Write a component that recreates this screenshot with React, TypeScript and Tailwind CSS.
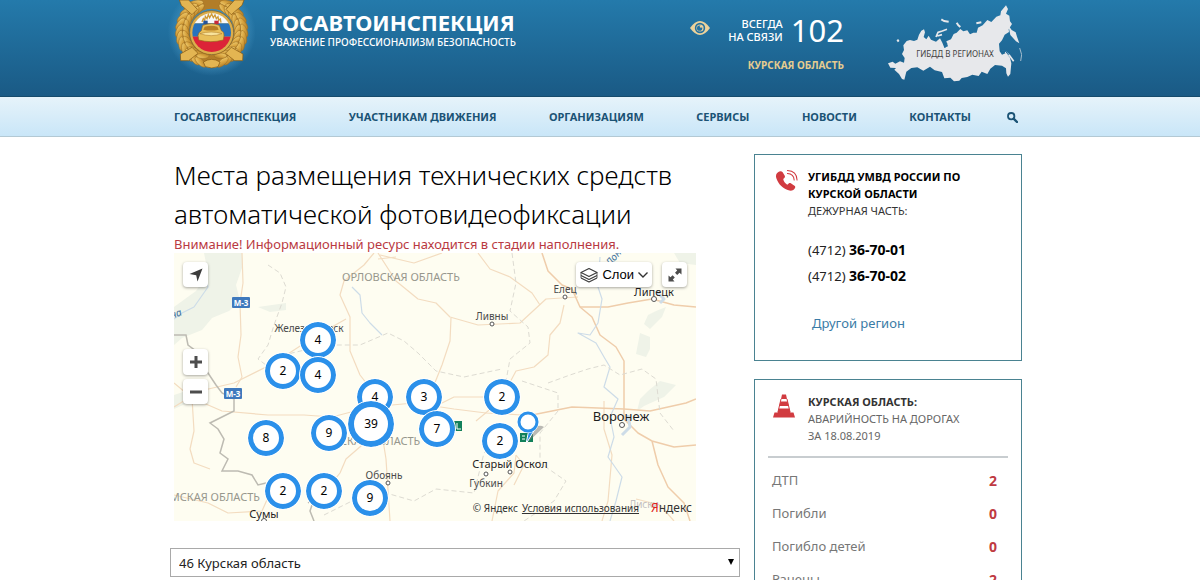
import { useState } from "react";

const navItems = [
  "ГОСАВТОИНСПЕКЦИЯ",
  "УЧАСТНИКАМ ДВИЖЕНИЯ",
  "ОРГАНИЗАЦИЯМ",
  "СЕРВИСЫ",
  "НОВОСТИ",
  "КОНТАКТЫ",
];

const stats = [
  { name: "ДТП", value: 2 },
  { name: "Погибли", value: 0 },
  { name: "Погибло детей", value: 0 },
  { name: "Ранены", value: 2 },
];

// later items are drawn over earlier ones
const clusters = [
  { count: 4, pos: "left-[126px] top-[69px]" },
  { count: 2, pos: "left-[91px] top-[100px]" },
  { count: 4, pos: "left-[126px] top-[104px]" },
  { count: 4, pos: "left-[183px] top-[126px]" },
  { count: 3, pos: "left-[232px] top-[126px]" },
  { count: 2, pos: "left-[310px] top-[126px]" },
  { count: 7, pos: "left-[245px] top-[158px]" },
  { count: 9, pos: "left-[137px] top-[162px]" },
  { count: 8, pos: "left-[74px] top-[167px]" },
  { count: 2, pos: "left-[308px] top-[170px]" },
  { count: 2, pos: "left-[91px] top-[220px]" },
  { count: 2, pos: "left-[132px] top-[220px]" },
  { count: 9, pos: "left-[178px] top-[227px]" },
];

const leafAngles = [-62, -50, -38, -26, -14, -2, 10, 22, 34, 46, 58, 70];

function Emblem() {
  return (
    <svg viewBox="0 0 270 228" className="h-[76px] w-[90px]" role="img" aria-label="Госавтоинспекция">
      <defs>
        <linearGradient id="gold" x1="0" y1="0" x2="1" y2="1">
          <stop offset="0" stopColor="#f3d57c" />
          <stop offset="0.5" stopColor="#d9a540" />
          <stop offset="1" stopColor="#a3701f" />
        </linearGradient>
        <radialGradient id="glow">
          <stop offset="0.7" stopColor="#4f9cc8" stopOpacity="0.6" />
          <stop offset="1" stopColor="#4f9cc8" stopOpacity="0" />
        </radialGradient>
        <clipPath id="disc">
          <circle cx="137" cy="98" r="58" />
        </clipPath>
      </defs>
      <circle cx="137" cy="96" r="132" fill="url(#glow)" />
      <circle cx="137" cy="95" r="86" fill="none" stroke="#b27d28" strokeWidth="34" />
      {leafAngles.map((a) => (
        <g key={a} fill="url(#gold)" stroke="#9a6a1e" strokeWidth="1.5">
          <ellipse cx="234" cy="95" rx="9" ry="21" transform={`rotate(${a} 137 95) rotate(-22 234 95)`} />
          <ellipse cx="214" cy="95" rx="8" ry="19" transform={`rotate(${a} 137 95) rotate(20 214 95)`} />
          <ellipse cx="40" cy="95" rx="9" ry="21" transform={`rotate(${-a} 137 95) rotate(22 40 95)`} />
          <ellipse cx="60" cy="95" rx="8" ry="19" transform={`rotate(${-a} 137 95) rotate(-20 60 95)`} />
        </g>
      ))}
      <g fill="#e3b552" stroke="#80530f" strokeWidth="2">
        <path d="M40 0 L68 0 L94 28 L78 44 L46 16 Z" />
        <path d="M234 0 L206 0 L180 28 L196 44 L228 16 Z" />
        <path d="M78 142 L96 160 L68 182 L44 182 L43 162 Z" />
        <path d="M196 142 L178 160 L206 182 L230 182 L231 162 Z" />
        <path d="M112 186 Q137 170 162 186 L156 200 Q137 208 118 200 Z" />
      </g>
      <circle cx="137" cy="98" r="66" fill="#dcae4b" stroke="#8a5c18" strokeWidth="2" />
      <g clipPath="url(#disc)">
        <rect x="78" y="38" width="120" height="32" fill="#f6f8fa" />
        <rect x="78" y="70" width="120" height="40" fill="#2773bd" />
        <rect x="78" y="110" width="120" height="50" fill="#dc2338" />
      </g>
      <path
        d="M108 66 L112 56 L116 61 L118 49 L123 56 L127 44 L131 53 L137 42 L142 53 L147 45 L151 56 L156 50 L158 61 L163 57 L165 68"
        fill="none"
        stroke="#cf9a35"
        strokeWidth="4"
      />
      <rect x="112" y="62" width="13" height="10" fill="#23539a" />
      <rect x="145" y="62" width="13" height="10" fill="#c8283a" />
      <path
        d="M110 76 Q137 66 160 76 L166 92 Q176 96 174 108 L172 120 Q134 130 98 120 L96 106 Q98 96 106 92 Z"
        fill="#e8bf59"
        stroke="#94651c"
        strokeWidth="2"
      />
      <path d="M116 80 Q136 74 154 80 L158 89 Q134 94 112 89 Z" fill="#b77e24" />
      <path d="M102 101 Q136 91 168 101 Q136 113 102 101 Z" fill="#f8e39b" stroke="#a87422" strokeWidth="1.5" />
    </svg>
  );
}

function RussiaMap() {
  return (
    <svg viewBox="24 12 402 234" className="h-[78px] w-[134px] fill-[#e7e8eb]" aria-hidden="true">
      <path d="M24 190 L38 185 L46 191 L60 184 L72 188 L74 174 L66 162 L72 150 L70 136 L80 123 L90 120 L102 123 L112 119 L117 104 L124 92 L132 88 L135 97 L131 111 L139 118 L146 107 L153 119 L168 125 L180 115 L187 128 L193 143 L204 139 L199 124 L213 118 L221 102 L230 98 L241 87 L250 94 L262 91 L270 103 L280 98 L290 98 L294 83 L308 76 L322 60 L334 66 L349 50 L361 46 L363 34 L378 16 L384 27 L378 41 L388 47 L390 64 L396 72 L386 88 L387 96 L374 104 L366 121 L357 131 L359 154 L366 164 L378 159 L390 173 L394 190 L391 222 L384 230 L379 220 L378 205 L366 197 L345 195 L331 206 L322 222 L305 215 L296 228 L277 224 L262 231 L245 234 L238 242 L222 244 L211 233 L193 235 L186 216 L164 211 L150 200 L130 212 L112 202 L94 204 L79 215 L73 239 L66 237 L57 222 L43 209 L48 204 L31 203 Z" />
      <path d="M385 76 L395 90 L407 97 L411 110 L418 130 L408 124 L391 105 Z" />
      <g fill="none" stroke="#e7e8eb" strokeLinejoin="round">
        <path d="M168 111 L174 97 L187 93 L201 88 M172 108 L186 104" strokeWidth="5" />
        <path d="M184 58 L192 63 L206 65 M230 68 L235 76 L241 81 M289 70 L304 67 M52 119 L56 125" strokeWidth="6" />
        <path d="M376 156 L388 166 L401 184" strokeWidth="5" />
        <path d="M419 144 L425 164 L422 183" strokeWidth="2" />
      </g>
      <path d="M194 144 L201 131 M366 152 L374 151 L386 165" fill="none" stroke="#2370a1" strokeWidth="3" />
    </svg>
  );
}

// roads, rivers, borders and forest of the base layer
function MapLayer() {
  return (
    <svg
      viewBox="0 0 522 268"
      preserveAspectRatio="xMinYMin slice"
      className="absolute inset-0 h-full w-full"
      fontFamily="'Noto Sans', sans-serif"
      aria-hidden="true"
    >
      <rect width="522" height="268" fill="#fefdf1" />
      <g fill="#eff3e8">
        <path d="M30 0 L68 0 L69 12 L62 32 L66 48 L55 58 L38 65 L28 77 L8 85 L0 92 L0 54 L22 38 L34 20 Z" />
        <path d="M84 54 L112 50 L112 57 L96 59 Z" />
        <path d="M482 58 L492 54 L488 64 L476 76 L470 71 L474 62 Z" />
        <path d="M466 80 L476 84 L476 96 L472 104 L462 101 Z" />
        <path d="M474 138 L486 128 L502 132 L490 144 L470 153 L463 158 L466 146 Z" />
        <path d="M500 0 L522 0 L522 12 L506 10 Z" />
        <path d="M0 142 L12 138 L18 148 L0 156 Z" />
      </g>
      <g fill="none" stroke="#f3dcc0" strokeWidth="1.2" strokeLinejoin="round">
        <path d="M68 0 L69 30 L66 50 L67 82 L64 104 L68 124 L62 134" />
        <path d="M0 154 L26 138 L60 130 L100 110 L140 84 L172 66" />
        <path d="M0 130 L18 145 L48 158 L94 162 L130 162 L158 164 L196 154 L240 150 L280 156 L312 160 L348 162" />
        <path d="M200 0 L190 12 L170 28 L166 42 L176 64 L176 98 L186 122 L200 140 L206 168 L212 206 L216 268" />
        <path d="M204 0 L222 28 L244 46 L262 50 L276 64 L304 72 L346 70 L372 46 L404 44" />
        <path d="M277 65 L276 88 L268 112 L260 132 L252 160" />
        <path d="M304 0 L316 16 L336 24 L358 40 L366 52" />
        <path d="M390 52 L386 70 L376 82 L374 102 L360 114 L342 118 L326 148 L302 168" />
        <path d="M18 145 L20 178 L16 196 L20 210 L36 216" />
        <path d="M0 242 L34 250 L54 260 L88 258 L96 240" />
        <path d="M150 240 L166 220 L172 206 L202 180" />
        <path d="M430 148 L430 176 L438 202 L434 248 L428 268" />
        <path d="M252 158 L280 144 L312 144 L340 140" />
        <path d="M342 202 L340 220 L324 238 L318 268 M342 202 L350 212 L340 232" />
        <path d="M500 268 L486 252 L462 246" />
        <path d="M204 6 L222 4 M206 2 L240 10 L268 0" />
      </g>
      <g fill="none" stroke="#efcdab" strokeWidth="1.5" strokeLinejoin="round">
        <path d="M368 0 L374 18 L388 32 L398 36 L406 54 L418 64 L426 82 L442 94 L450 108 L450 136 L450 166" />
        <path d="M406 54 L434 54 L454 50 L478 46 L500 52 L522 54" />
        <path d="M450 166 L464 180 L478 188 L484 212 L494 234 L510 250 L516 268 M478 188 L500 194 L522 192" />
        <path d="M348 164 L378 158 L398 154 L450 156 L476 158 L512 150 L522 146" />
      </g>
      <g fill="none" stroke="#cddce8" strokeWidth="1.2" strokeLinejoin="round">
        <path d="M0 66 L8 60 L20 54 L34 34 L30 20" />
        <path d="M426 4 L424 34 L428 46 L424 70 L416 82 L404 80 L422 90 L430 104 L436 114 L430 134 L444 146 L436 164 L440 184 L434 204 L448 224 L442 248 L436 268" />
        <path d="M178 34 L186 42 L188 60 L196 70 L208 82" />
        <path d="M482 38 L490 46 L486 50 M448 182 L456 174 L454 162" strokeWidth="3" />
      </g>
      <path
        d="M0 82 L12 82 L14 92 L22 98 L26 108 L34 120 L42 132 L48 140 L60 146 L60 158 L36 170 L44 176 L50 186 L46 200 L54 206 L48 218 L64 218 L78 222 L84 232 L92 230"
        fill="none"
        stroke="#bdbbb2"
        strokeWidth="1.5"
      />
      <path d="M134 250 L140 246 L136 258 L140 268" fill="none" stroke="#bdbbb2" strokeWidth="1.5" />
      <g fill="none" stroke="#dddbd2" strokeWidth="1" strokeDasharray="5 3">
        <path d="M94 12 L106 20 L112 34 L108 50 L100 72 L94 92 L84 106 L92 112 L118 100 L152 92 L186 92 L214 80 L230 88 L244 100 L262 118 L290 124 L328 116" />
        <path d="M338 0 L342 30 L336 58 L354 74 L356 90 L336 106 L332 128" />
        <path d="M374 130 L396 122 L414 116 L430 112 L446 122 L468 116 L482 126 L486 160 L500 178" />
        <path d="M348 128 L384 140 L384 158 L366 180 L366 210 L392 228 L380 248 L350 268" />
        <path d="M150 262 L178 248 L212 240 L240 248 L262 236 L300 240 L310 200 L320 192" />
      </g>
      <g fill="#3f79bd">
        <rect x="58" y="44" width="18" height="11" rx="1" />
        <rect x="50" y="135" width="18" height="11" rx="1" />
      </g>
      <g fill="#fff" fontSize="8" fontWeight="700" textAnchor="middle">
        <text x="67" y="53">М-3</text>
        <text x="59" y="144">М-3</text>
      </g>
      <g fill="#97978d" fontSize="11" textAnchor="middle">
        <text x="227" y="28">ОРЛОВСКАЯ ОБЛАСТЬ</text>
        <text x="196" y="192">КУРСКАЯ ОБЛАСТЬ</text>
        <text x="86" y="248" textAnchor="end">СУМСКАЯ ОБЛАСТЬ</text>
      </g>
      <g fill="#4b4b4b" fontSize="10" textAnchor="middle">
        <text x="135" y="79">Железногорск</text>
        <text x="391" y="40">Елец</text>
        <text x="318" y="67">Ливны</text>
        <text x="210" y="226">Обоянь</text>
        <text x="312" y="234">Губкин</text>
        <text x="470" y="255" fill="#c3bfc0">Лиски</text>
      </g>
      <g fill="#1e1e1e" fontSize="11" textAnchor="middle">
        <text x="480" y="43">Липецк</text>
        <text x="336" y="215">Старый Оскол</text>
        <text x="90" y="265">Сумы</text>
        <text x="447" y="168" fontSize="13">Воронеж</text>
      </g>
      <g fill="#3d6f9c" fontSize="10" fontStyle="italic">
        <text x="-8" y="65" transform="rotate(-22 0 62)">сна</text>
        <text x="434" y="11" transform="rotate(-50 438 10)">Дон</text>
      </g>
      <g fill="#fff" stroke="#555" strokeWidth="1">
        <circle cx="391" cy="44" r="2" />
        <circle cx="318" cy="71" r="2" />
        <circle cx="480" cy="46" r="2.5" />
        <circle cx="448" cy="172" r="2.5" />
        <circle cx="336" cy="219" r="2" />
        <circle cx="312" cy="221" r="2" />
        <circle cx="214" cy="230" r="2" />
        <circle cx="90" cy="268" r="2.5" />
      </g>
      <g fill="#12805a">
        <rect x="280" y="168" width="8" height="10" />
        <rect x="346" y="180" width="13" height="9" />
      </g>
      <path d="M283 170 V176 H287 M348 183 H351 M348 186 H351" stroke="#fff" strokeWidth="1" fill="none" />
      <path d="M353 190 L370 174 Q364 170 358 178 Z" fill="#777" opacity="0.5" />
      <path d="M364 171 L352 191 L355 176 Z" fill="#2b90ea" stroke="#fff" strokeWidth="1" />
      <circle cx="354" cy="169" r="11" fill="#fff" />
      <circle cx="354" cy="169" r="9" fill="#fff" stroke="#2b90ea" strokeWidth="3" />
    </svg>
  );
}

const mapButton = "absolute flex items-center justify-center rounded-sm bg-white shadow-[0_1px_3px_rgba(0,0,0,0.35)] cursor-pointer";

function MapPanel() {
  return (
    <div className="relative h-[268px] w-full max-w-[522px] overflow-hidden">
      <MapLayer />

      {clusters.map((c, i) => (
        <button
          key={i}
          className={`absolute h-9 w-9 rounded-full border-5 border-[#2b90ea] bg-white text-[12px] leading-none text-black outline outline-white cursor-pointer ${c.pos}`}
        >
          {c.count}
        </button>
      ))}
      <button className="absolute left-[174px] top-[148px] h-[46px] w-[46px] rounded-full border-6 border-[#2b90ea] bg-white text-[12px] leading-none text-black outline outline-white cursor-pointer">
        39
      </button>

      <button aria-label="Моё местоположение" className={`${mapButton} left-[9px] top-[9px] h-[25px] w-[25px]`}>
        <svg viewBox="0 0 14 14" className="h-[14px] w-[14px] fill-[#3c3c3c]">
          <path d="M13.5 0.5 L8.5 13.5 L7.2 7.2 L0.5 6 Z" />
        </svg>
      </button>
      <button aria-label="Приблизить" className={`${mapButton} left-[9px] top-[96px] h-[26px] w-[25px]`}>
        <svg viewBox="0 0 12 12" className="h-3 w-3">
          <path d="M6 0 V12 M0 6 H12" stroke="#4d4d4d" strokeWidth="3" />
        </svg>
      </button>
      <button aria-label="Отдалить" className={`${mapButton} left-[9px] top-[126px] h-[25px] w-[25px]`}>
        <svg viewBox="0 0 12 12" className="h-3 w-3">
          <path d="M0 6 H12" stroke="#4d4d4d" strokeWidth="3" />
        </svg>
      </button>
      <button className={`${mapButton} right-[44px] top-[9px] h-[25px] gap-1 px-1 font-[Roboto] text-[13px] text-black`}>
        <svg viewBox="0 0 18 16" className="h-4 w-[18px]" fill="none" stroke="#3c3c3c" strokeWidth="1.2" strokeLinejoin="round">
          <path d="M1 11 L9 15 L17 11 M1 8.5 L9 12.5 L17 8.5" />
          <path d="M9 1.5 L17 5.5 L9 9.5 L1 5.5 Z" fill="#fff" />
          <path d="M1 5.5 V11 M17 5.5 V11" strokeWidth="0.8" />
        </svg>
        <span className="font-['Liberation_Sans',sans-serif]">Слои</span>
        <svg viewBox="0 0 10 6" className="h-[6px] w-[10px]" fill="none" stroke="#333" strokeWidth="1.4">
          <path d="M0.5 0.5 L5 5 L9.5 0.5" />
        </svg>
      </button>
      <button aria-label="На весь экран" className={`${mapButton} right-[9px] top-[9px] h-[25px] w-[25px]`}>
        <svg viewBox="0 0 14 14" className="h-[14px] w-[14px] fill-[#4d4d4d]">
          <path d="M7.5 0.5 H13.5 V6.5 L11.5 4.8 L9.2 7 L7 4.8 L9.2 2.5 Z" />
          <path d="M6.5 13.5 H0.5 V7.5 L2.5 9.2 L4.6 7.2 L6.8 9.4 L4.8 11.5 Z" />
        </svg>
      </button>

      <div className="absolute bottom-1 right-1 flex items-center gap-1 whitespace-nowrap text-[10px] text-[#333]">
        <span>© Яндекс</span>
        <a href="#" className="mr-2 underline">Условия использования</a>
        <span className="text-[12px] text-[#333]">
          <span className="text-[#e02020]">Я</span>ндекс
        </span>
      </div>
    </div>
  );
}

function App() {
  const [region, setRegion] = useState("46");

  return (
    <div className="h-screen overflow-hidden bg-white font-['Noto_Sans',sans-serif] text-black">
      <header className="border-b border-[#164b6c] bg-linear-to-b from-[#247aab] to-[#1a5a85] pr-1">
        <div className="mx-auto flex h-24 max-w-[848px] items-start text-white">
          <a href="#" className="-ml-2 flex">
            <Emblem />
            <div className="ml-[14px] mt-2.5">
              <div className="text-[22px] font-bold leading-6">ГОСАВТОИНСПЕКЦИЯ</div>
              <div className="text-[10px] font-medium leading-4">УВАЖЕНИЕ ПРОФЕССИОНАЛИЗМ БЕЗОПАСНОСТЬ</div>
            </div>
          </a>

          <div className="ml-auto flex items-start">
            <button aria-label="Версия для слабовидящих" className="mr-[18px] mt-5 cursor-pointer">
              <svg viewBox="0 0 20 14" className="h-4 w-5">
                <path d="M0 7 Q10 -7 20 7 Q10 21 0 7 Z" fill="#ecd29b" />
                <circle cx="10" cy="7" r="5.2" fill="#2471a1" />
                <circle cx="10" cy="7" r="3.6" fill="#ecd29b" />
                <circle cx="9.6" cy="7.2" r="2.6" fill="#2471a1" />
                <circle cx="11" cy="5.6" r="1.2" fill="#ecd29b" />
              </svg>
            </button>
            <div className="mt-4 flex flex-col items-end">
              <div className="flex items-center gap-2">
                <div className="text-right text-[11px] font-medium leading-[13px]">
                  ВСЕГДА
                  <br />
                  НА СВЯЗИ
                </div>
                <div className="text-[31px] leading-7">102</div>
              </div>
              <a href="#" className="mt-[14px] text-[10px] font-bold leading-[14px] text-[#e6cd8f]">КУРСКАЯ ОБЛАСТЬ</a>
            </div>
            <a href="#" className="relative ml-11 mt-1">
              <RussiaMap />
              <span className="absolute inset-x-0 top-11 text-center text-[8px] leading-3 text-[#444]">
                ГИБДД В РЕГИОНАХ
              </span>
            </a>
          </div>
        </div>
      </header>

      <nav className="border-b border-[#b3c9d4] bg-linear-to-b from-[#e6f3fa] to-[#c9e6f8] pr-1">
        <div className="mx-auto flex h-[39px] max-w-[848px] items-center pr-1 pt-0.5">
          <div className="mr-9 flex flex-1 justify-between">
            {navItems.map((item) => (
              <a key={item} href="#" className="text-[11px] font-bold text-[#1b5375]">
                {item}
              </a>
            ))}
          </div>
          <button aria-label="Поиск" className="cursor-pointer">
            <svg viewBox="0 0 11 11" className="h-[11px] w-[11px]" fill="none" stroke="#1b5375">
              <circle cx="4.2" cy="4.2" r="3.2" strokeWidth="1.8" />
              <path d="M6.6 6.6 L10 10" strokeWidth="2.4" strokeLinecap="round" />
            </svg>
          </button>
        </div>
      </nav>

      <div className="pr-1">
        <div className="mx-auto flex max-w-[848px] items-start justify-between gap-3 pt-[17px]">
          <main className="max-w-[566px] flex-1">
            <h1 className="pt-0.5 text-[26px] font-[350] leading-[39px]">
              Места размещения технических средств автоматической фотовидеофиксации
            </h1>
            <p className="mt-px text-[13px] leading-[18px] text-[#b93a42]">
              Внимание! Информационный ресурс находится в стадии наполнения.
            </p>
            <MapPanel />
            <div className="relative -ml-1 mt-[27px]">
              <select
                aria-label="Регион"
                value={region}
                onChange={(e) => setRegion(e.target.value)}
                className="h-[29px] w-full appearance-none border border-[#a9a9a9] bg-white pl-2 pt-0.5 text-[13px] text-[#222]"
              >
                <option value="46">46 Курская область</option>
                <option value="48">48 Липецкая область</option>
              </select>
              <svg viewBox="0 0 6 6" className="pointer-events-none absolute right-[6px] top-[11px] h-[6px] w-[6px]">
                <path d="M0 0 H6 L3 6 Z" />
              </svg>
            </div>
          </main>

          <aside className="flex w-[268px] shrink-0 flex-col gap-[18px]">
            <section className="flex border border-[#4a8391] px-5 pb-6 pt-[13px]">
              <svg viewBox="0 0 24 24" className="mt-px h-6 w-[23px] shrink-0">
                <path
                  d="M3.5 2.5 C1 4 0.5 6.5 1.5 9.5 C3.5 15.5 8.5 20.5 15 22 C17.5 22.5 20 21.5 21 19 C21.3 18 21 17.5 20.3 17 L16.5 14.3 C15.7 13.9 15 14 14.3 14.5 L12.8 15.8 C10.5 14.8 9 12.5 8.6 10 L10 8.6 C10.5 8 10.6 7.3 10.2 6.6 L8 2.8 C7.2 1.8 5 1.6 3.5 2.5 Z"
                  fill="#d13b40"
                />
                <g fill="none" stroke="#d13b40" strokeWidth="1.1" strokeLinecap="round">
                  <path d="M13 1 C19 1.2 22.8 5 23 11" />
                  <path d="M13 4.2 C17 4.4 19.8 7 20 11" />
                </g>
              </svg>
              <div className="ml-[10px]">
                <h2 className="text-[11px] font-bold leading-[17px]">
                  УГИБДД УМВД РОССИИ ПО
                  <br />
                  КУРСКОЙ ОБЛАСТИ
                </h2>
                <p className="text-[11px] leading-[17px] text-[#333]">ДЕЖУРНАЯ ЧАСТЬ:</p>
                <p className="mt-[18px] text-[13px] leading-[26px] text-[#222]">
                  (4712) <b className="text-[14px] text-black">36-70-01</b>
                </p>
                <p className="text-[13px] leading-[26px] text-[#222]">
                  (4712) <b className="text-[14px] text-black">36-70-02</b>
                </p>
                <a href="#" className="ml-1 mt-[21px] block text-[13px] leading-[26px] text-[#3a7ba6]">
                  Другой регион
                </a>
              </div>
            </section>

            <section className="border border-[#4a8391] px-[13px] pb-6 pt-[13px]">
              <div className="flex px-[5px]">
                <svg viewBox="0 0 22 24" className="mt-px h-6 w-[22px] shrink-0" fill="#d13b40">
                  <path d="M9 0.5 H13 L14 5 H8 Z" />
                  <path d="M7.4 7.5 H14.6 L15.7 12 H6.3 Z" />
                  <path d="M5.7 14.5 H16.3 L17.4 18.5 H20.5 L22 23.5 H0 L1.5 18.5 H4.6 Z" />
                  <path d="M8 5 L5 18 M14 5 L17 18" stroke="#d13b40" strokeWidth="1" />
                </svg>
                <div className="ml-[13px]">
                  <h2 className="text-[11px] font-bold leading-[17px] text-[#333]">КУРСКАЯ ОБЛАСТЬ:</h2>
                  <p className="text-[11px] leading-[17px] text-[#666]">
                    АВАРИЙНОСТЬ НА ДОРОГАХ
                    <br />
                    ЗА 18.08.2019
                  </p>
                </div>
              </div>
              <hr className="mb-[6px] mt-3 border-t-2 border-[#c8cdd0]" />
              <table className="w-full text-[13px]">
                <tbody>
                  {stats.map((s) => (
                    <tr key={s.name} className="h-[33px]">
                      <th scope="row" className="pl-1 text-left font-normal text-[#777]">{s.name}</th>
                      <td className="pr-[11px] text-right text-[14px] font-bold text-[#bf3a42]">{s.value}</td>
                    </tr>
                  ))}
                </tbody>
              </table>
            </section>
          </aside>
        </div>
      </div>
    </div>
  );
}

export default App;
